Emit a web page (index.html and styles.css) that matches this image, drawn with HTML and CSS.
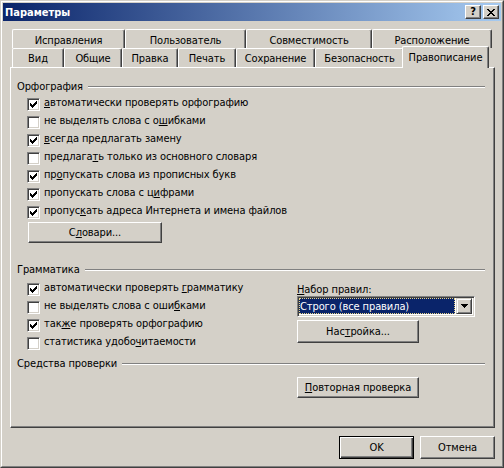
FILE: index.html
```html
<!DOCTYPE html>
<html lang="ru">
<head>
<meta charset="utf-8">
<title>Параметры</title>
<link rel="stylesheet" href="styles.css">
</head>
<body>
<div class="window">
  <div class="window-inner">
    <div class="titlebar">
      <span class="title">Параметры</span>
      <div class="caption-btns">
        <span class="cbtn help">?</span>
        <span class="cbtn close">
          <svg width="8" height="7" viewBox="0 0 8 7" shape-rendering="crispEdges"><path d="M0 0h2v1h-2zM6 0h2v1h-2zM1 1h2v1h-2zM5 1h2v1h-2zM2 2h4v1h-4zM3 3h2v1h-2zM2 4h4v1h-4zM1 5h2v1h-2zM5 5h2v1h-2zM0 6h2v1h-2zM6 6h2v1h-2z" fill="#000"/></svg>
        </span>
      </div>
    </div>

    <div class="tabs">
      <div class="tabrow back">
        <div class="tab">Исправления</div>
        <div class="tab">Пользователь</div>
        <div class="tab">Совместимость</div>
        <div class="tab">Расположение</div>
      </div>
      <div class="tabrow front">
        <div class="tab">Вид</div>
        <div class="tab">Общие</div>
        <div class="tab">Правка</div>
        <div class="tab">Печать</div>
        <div class="tab">Сохранение</div>
        <div class="tab">Безопасность</div>
        <div class="tab active">Правописание</div>
      </div>
    </div>

    <div class="panel">
      <section class="group spelling">
        <div class="group-head"><span>Орфография</span><i class="rule"></i></div>
        <ul class="checks">
          <li><span class="cb on"></span><span><u>а</u>втоматически проверять орфографию</span></li>
          <li><span class="cb"></span><span>не выделять слова с о<u>ш</u>ибками</span></li>
          <li><span class="cb on"></span><span><u>в</u>сегда предлагать замену</span></li>
          <li><span class="cb"></span><span>предлага<u>т</u>ь только из основного словаря</span></li>
          <li><span class="cb on"></span><span>пр<u>о</u>пускать слова из прописных букв</span></li>
          <li><span class="cb on"></span><span>пропускать слова с ц<u>и</u>фрами</span></li>
          <li><span class="cb on"></span><span>пропус<u>к</u>ать адреса Интернета и имена файлов</span></li>
        </ul>
        <button class="btn dict">С<u>л</u>овари...</button>
      </section>

      <section class="group grammar">
        <div class="group-head"><span>Грамматика</span><i class="rule"></i></div>
        <div class="grammar-body">
          <ul class="checks">
            <li><span class="cb on"></span><span>автоматически проверять <u>г</u>рамматику</span></li>
            <li><span class="cb"></span><span>не выделять слова с оши<u>б</u>ками</span></li>
            <li><span class="cb on"></span><span>так<u>ж</u>е проверять орфографию</span></li>
            <li><span class="cb"></span><span>статистика удобо<u>ч</u>итаемости</span></li>
          </ul>
          <div class="rules">
            <div class="rules-label"><u>Н</u>абор правил:</div>
            <div class="combo">
              <span class="combo-value">Строго (все правила)</span>
              <span class="combo-btn">
                <svg width="7" height="4" viewBox="0 0 7 4" shape-rendering="crispEdges"><path d="M0 0h7v1h-7zM1 1h5v1h-5zM2 2h3v1h-3zM3 3h1v1h-1z" fill="#000"/></svg>
              </span>
            </div>
            <button class="btn setup">Нас<u>т</u>ройка...</button>
          </div>
        </div>
      </section>

      <section class="group tools">
        <div class="group-head"><span>Средства проверки</span><i class="rule"></i></div>
        <div class="tools-body">
          <button class="btn recheck"><u>П</u>овторная проверка</button>
        </div>
      </section>
    </div>

    <div class="footer">
      <button class="btn default">OK</button>
      <button class="btn">Отмена</button>
    </div>
  </div>
</div>
</body>
</html>
```
FILE: styles.css
```css
* { box-sizing: border-box; }
html, body { margin: 0; padding: 0; }
body {
  background: #D4D0C8;
  font-family: "DejaVu Sans Condensed", "DejaVu Sans", sans-serif;
  font-stretch: condensed;
  font-size: 11px;
  line-height: 13px;
  letter-spacing: -0.1px;
  color: #000;
}
u { text-decoration: underline; text-underline-offset: 1px; }

.window {
  width: 504px;
  height: 468px;
  border: 1px solid;
  border-color: #D4D0C8 #404040 #404040 #D4D0C8;
  background: #D4D0C8;
}
.window-inner {
  height: 100%;
  border: 1px solid;
  border-color: #fff #808080 #808080 #fff;
  padding: 1px;
  display: flex;
  flex-direction: column;
}

/* title bar */
.titlebar {
  height: 18px;
  flex: none;
  display: flex;
  align-items: center;
  justify-content: space-between;
  padding: 0 2px;
  background: linear-gradient(to right, #0A246A, #A6CAF0);
}
.title { color: #fff; font-weight: bold; letter-spacing: 0; }
.caption-btns { display: flex; gap: 2px; }
.cbtn {
  width: 16px;
  height: 14px;
  background: #D4D0C8;
  border: 1px solid;
  border-color: #fff #404040 #404040 #fff;
  box-shadow: inset -1px -1px #808080;
  display: flex;
  align-items: center;
  justify-content: center;
}
.cbtn.help { font-weight: bold; font-size: 11px; line-height: 12px; padding-bottom: 1px; }

/* tabs */
.tabs { margin: 8px 0 0 9px; flex: none; }
.tabrow { display: flex; height: 19px; }
.tab {
  height: 19px;
  flex: none;
  border-left: 1px solid #fff;
  border-top: 1px solid #fff;
  border-right: 1px solid #404040;
  box-shadow: inset -1px 0 #808080;
  border-top-left-radius: 2px;
  border-top-right-radius: 2px;
  text-align: center;
  padding-top: 3px;
  white-space: nowrap;
  background: #D4D0C8;
}
.back .tab { padding-top: 4px; }
.back .tab:nth-child(1) { width: 113px; }
.back .tab:nth-child(2) { width: 121px; }
.back .tab:nth-child(3) { width: 126px; }
.back .tab:nth-child(4) { width: 120px; }
.front .tab:nth-child(1) { width: 52px; }
.front .tab:nth-child(2) { width: 58px; }
.front .tab:nth-child(3) { width: 56px; }
.front .tab:nth-child(4) { width: 58px; }
.front .tab:nth-child(5) { width: 79px; }
.front .tab:nth-child(6) { width: 89px; }
.front .tab:nth-child(7) { width: 87px; }
.tab.active {
  position: relative;
  z-index: 2;
  height: 22px;
  width: 91px;
  margin: -2px -2px 0 -2px;
  padding-top: 4px;
}

/* panel */
.panel {
  flex: none;
  margin-left: 7px;
  width: 485px;
  height: 361px;
  border: 1px solid;
  border-color: #fff #404040 #404040 #fff;
  box-shadow: inset -1px -1px #808080;
  padding: 12px 9px 0 6px;
}
.group-head { display: flex; gap: 5px; height: 13px; }
.group-head span { white-space: nowrap; }
.rule {
  flex: 1;
  height: 2px;
  margin-top: 6px;
  border-top: 1px solid #808080;
  border-bottom: 1px solid #fff;
}
.checks { list-style: none; margin: 3px 0 0 10px; padding: 0; }
.checks li { display: flex; align-items: flex-start; gap: 4px; height: 18px; white-space: nowrap; }
.cb {
  flex: none;
  width: 13px;
  height: 13px;
  margin-top: 2px;
  background: #fff;
  border: 1px solid;
  border-color: #808080 #fff #fff #808080;
  box-shadow: inset 1px 1px #404040, inset -1px -1px #D4D0C8;
}
.cb.on {
  background: #fff url("data:image/svg+xml;utf8,<svg xmlns='http://www.w3.org/2000/svg' width='7' height='7' shape-rendering='crispEdges'><path d='M6 0h1v1h-1zM5 1h2v1h-2zM0 2h1v1h-1zM4 2h3v1h-3zM0 3h2v1h-2zM3 3h3v1h-3zM0 4h5v1h-5zM1 5h3v1h-3zM2 6h1v1h-1z' fill='black'/></svg>") no-repeat 2px 2px;
}

.btn {
  font: inherit;
  letter-spacing: inherit;
  color: #000;
  background: #D4D0C8;
  border: 1px solid;
  border-color: #fff #404040 #404040 #fff;
  box-shadow: inset -1px -1px #808080;
  padding: 0;
  margin: 0;
  display: flex;
  align-items: center;
  justify-content: center;
  white-space: nowrap;
}
.dict { margin: 0 0 0 11px; width: 134px; height: 21px; }

.grammar { margin-top: 20px; }
.grammar-body {
  display: grid;
  grid-template-columns: 280px 178px;
  margin-top: 5px;
}
.grammar-body .checks { margin: 0 0 0 10px; }
.rules { margin-top: 2px; }
.rules-label { height: 13px; }
.combo {
  width: 178px;
  height: 21px;
  border: 1px solid;
  border-color: #808080 #fff #fff #808080;
  box-shadow: inset 1px 1px #404040, inset -1px -1px #D4D0C8;
  background: #fff;
  display: flex;
  padding: 1px 2px 2px 1px;
}
.combo-value {
  flex: 1;
  background: #0A246A;
  color: #fff;
  border: 1px dotted #E8D48A;
  line-height: 13px;
  padding: 1px 0 0 0;
  margin-right: 1px;
  white-space: nowrap;
}
.combo-btn {
  flex: none;
  width: 16px;
  height: 16px;
  background: #D4D0C8;
  border: 1px solid;
  border-color: #D4D0C8 #404040 #404040 #D4D0C8;
  box-shadow: inset 1px 1px #fff, inset -1px -1px #808080;
  display: flex;
  align-items: center;
  justify-content: center;
}
.setup { margin-top: 3px; width: 122px; height: 23px; }

.tools { margin-top: 4px; }
.tools-body { margin: 7px 0 0 280px; }
.recheck { width: 122px; height: 21px; }

.footer {
  flex: none;
  display: flex;
  justify-content: flex-end;
  gap: 6px;
  margin-top: 8px;
  padding-right: 6px;
}
.footer .btn { width: 75px; height: 23px; }
.btn.default {
  border: 1px solid #000;
  box-shadow: inset 1px 1px #fff, inset -1px -1px #404040, inset -2px -2px #808080;
}
```
